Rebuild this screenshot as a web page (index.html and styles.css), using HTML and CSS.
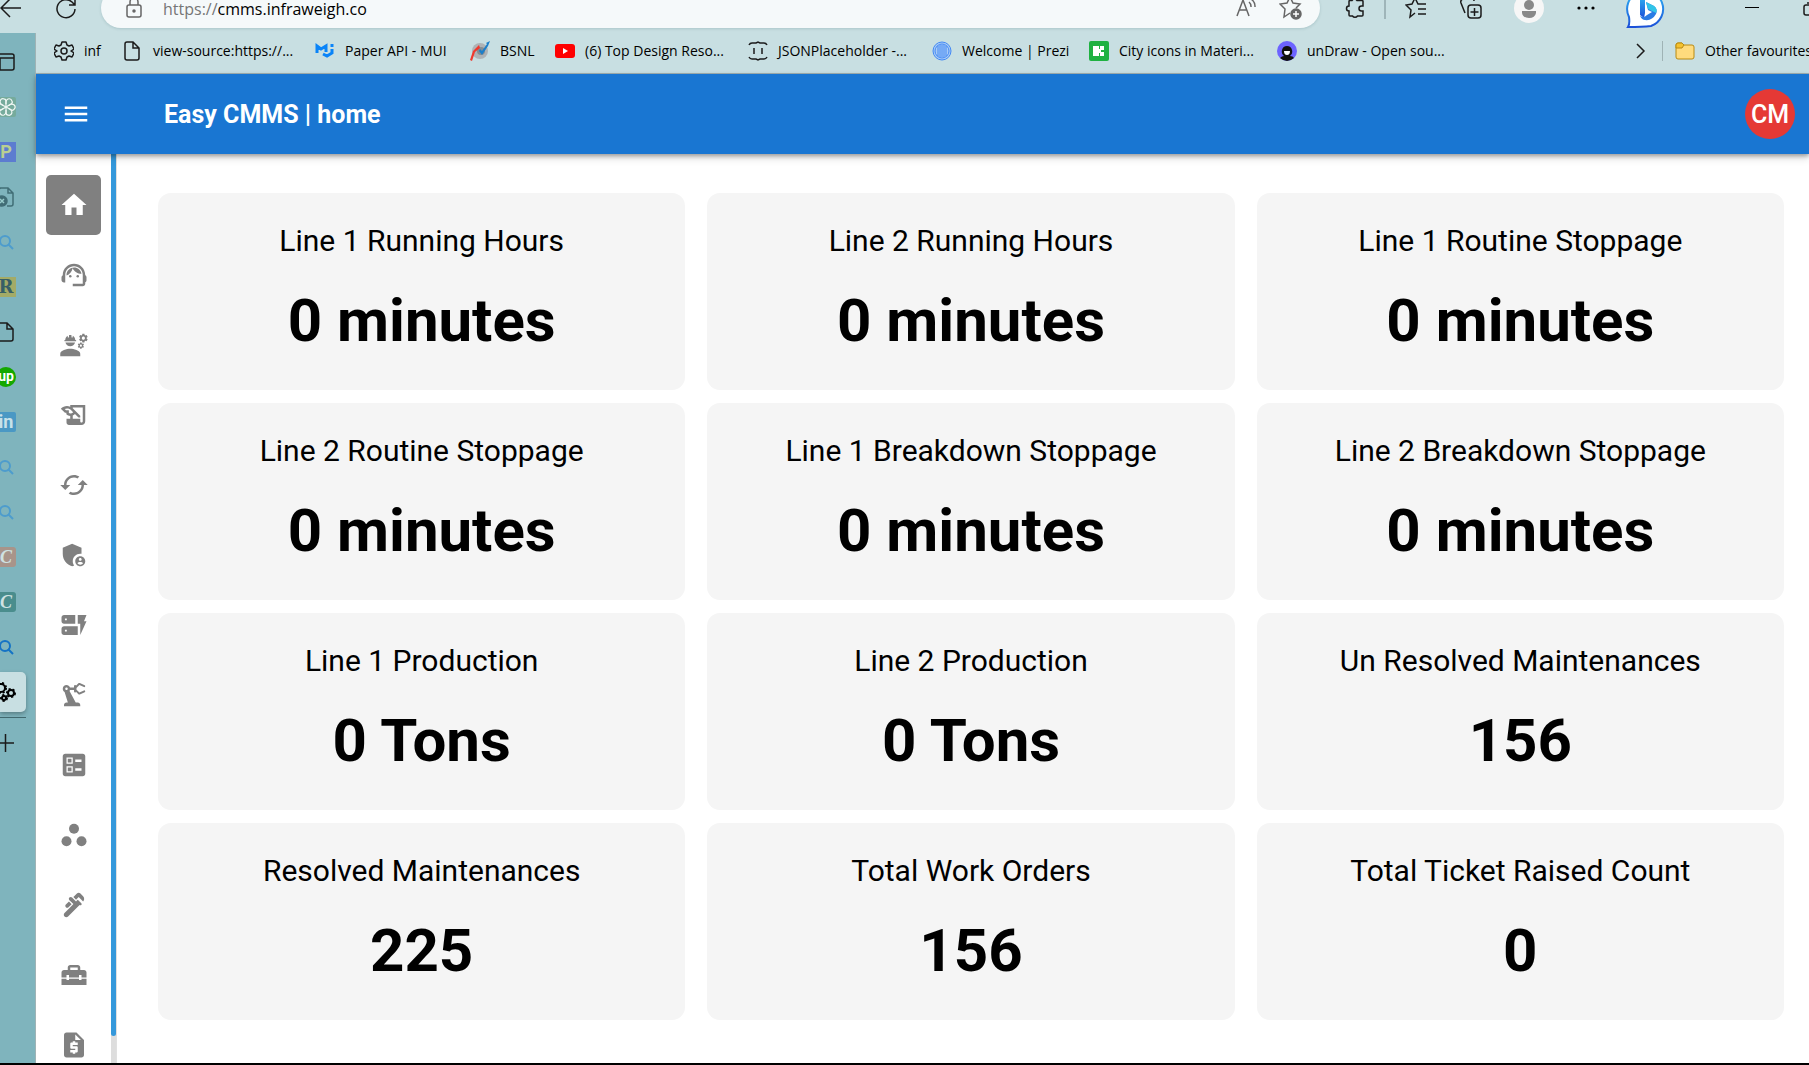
FILE: index.html
```html
<!DOCTYPE html>
<html lang="en">
<head>
<meta charset="utf-8">
<title>Easy CMMS | home</title>
<link rel="stylesheet" href="styles.css">
</head>
<body>
<div class="browser">
  <div class="toolbar">
    <button class="tool back" aria-label="Back"><svg width="22" height="20" viewBox="0 0 22 20" class="line"><path d="M21 10H1M10 1L1 10l9 9"/></svg></button>
    <button class="tool refresh" aria-label="Refresh"><svg width="22" height="22" viewBox="0 0 22 22" class="line"><path d="M20 12A9 9 0 1 1 17 5l3 3M20 2v6h-6"/></svg></button>
    <div class="omnibox">
      <svg width="16" height="22" viewBox="0 0 16 22" class="line grey"><rect x="1" y="8" width="14" height="12" rx="2"/><path d="M4 8V5a4 4 0 0 1 8 0v3"/><circle cx="8" cy="14" r="1" fill="#666"/></svg>
      <div class="url"><span>https://</span>cmms.infraweigh.co</div>
      <button class="tool" aria-label="Read aloud"><svg width="22" height="20" viewBox="0 0 22 20" class="line grey"><path d="M1 18L7 2l6 16M3 12h8M13 4a6 6 0 0 1 2 5M15 1a9 9 0 0 1 4 8"/></svg></button>
      <button class="tool" aria-label="Add to favourites"><svg width="24" height="24" viewBox="0 0 24 24" class="line grey"><path d="M11 17l-6 4 1-8-5-5 7-1 3-6 3 6 7 1-4 4"/><circle cx="17" cy="18" r="5" fill="#666"/><path d="M17 15v6M14 18h6" stroke="#fff"/></svg></button>
    </div>
    <div class="tools">
      <button class="tool ext" aria-label="Extensions"><svg width="20" height="22" viewBox="0 0 20 22" class="line"><path d="M7 3.500a3 3 0 0 1 5 0h5q1 0 1 1V9h-1.500a2.500 2.500 0 0 0 0 5H18v4q0 1-1 1h-4.500a3 3 0 0 1-5 0H5q-1 0-1-1v-4a2.500 2.500 0 0 1 0-5V4.500q0-1 1-1z"/></svg></button>
      <button class="tool fav" aria-label="Favourites"><svg width="22" height="22" viewBox="0 0 22 22" class="line"><path d="M10 16l-5 4 1-7-5-5 6-1 3-6 3 6h8M13 12h8M13 17h8"/></svg></button>
      <button class="tool coll" aria-label="Collections"><svg width="22" height="22" viewBox="0 0 22 22" class="line"><rect x="8" y="8" width="13" height="13" rx="3"/><path d="M14.500 11v8M10.500 15h8M5 16L1 6q-1-3 2-4l8-1q3 0 3 3"/></svg></button>
      <button class="tool profile" aria-label="Profile"><svg width="30" height="30" viewBox="0 0 30 30"><circle cx="15" cy="15" r="15" fill="#f6f6f6"/><circle cx="15" cy="12" r="5" fill="#888"/><path d="M8 18h14v2q-1 5-7 5t-7-5z" fill="#888"/></svg></button>
      <button class="tool more" aria-label="Settings and more"><svg width="18" height="4" viewBox="0 0 18 4"><circle cx="2" cy="2" r="1.600"/><circle cx="9" cy="2" r="1.600"/><circle cx="16" cy="2" r="1.600"/></svg></button>
      <button class="tool bing" aria-label="Bing"><svg width="40" height="40" viewBox="0 0 40 40"><defs><linearGradient id="b" x1="0" y1="0" x2="0" y2="1"><stop offset="0" stop-color="#2fb8f5"/><stop offset="1" stop-color="#1b50d8"/></linearGradient></defs><path d="M2 39q2-3 1-10A18 18 0 1 1 25 38q-9 1-23 1z" fill="#fff" stroke="url(#b)" stroke-width="2"/><path d="M14 7l5 2v16l-1 5-4-3z" fill="url(#b)"/><path d="M20 14l8 4q4 3 2 8-4 7-11 6-3 0-5-4l3 1q2 0 4-2l5-3-4-2z" fill="#2a7be4"/><path d="M20 14l8 4q4 3 2 7l-6-3-2-1z" fill="#31c4e8"/></svg></button>
      <button class="tool min" aria-label="Minimise"><svg width="14" height="2" viewBox="0 0 14 2"><path d="M0 0h14v1H0z"/></svg></button>
      <button class="tool max" aria-label="Maximise"><svg width="15" height="15" viewBox="0 0 15 15" class="line"><rect x="1" y="4" width="10" height="10" rx="2"/><path d="M4 2h8v8"/></svg></button>
    </div>
  </div>

  <div class="window">
    <nav class="tabs" aria-label="Tabs">
      <button class="tab" aria-label="Tab actions"><svg width="20" height="20" viewBox="0 0 20 20" class="line"><rect x="1" y="2" width="17" height="16" rx="2"/><path d="M1 6h17M4 6v12"/></svg></button>
      <button class="tab" aria-label="ChatGPT"><svg width="20" height="20" viewBox="0 0 20 20"><rect width="20" height="20" rx="2" fill="#76ab9c"/><g fill="none" stroke="#eff7f4" stroke-width="1.200"><path id="k" d="M10 7V5q0-2 2-3 3-1 4 2 1 2-1 3l-5 3"/><use href="#k" transform="rotate(60 10 10)"/><use href="#k" transform="rotate(120 10 10)"/><use href="#k" transform="rotate(180 10 10)"/><use href="#k" transform="rotate(240 10 10)"/><use href="#k" transform="rotate(300 10 10)"/></g></svg></button>
      <button class="tab" aria-label="P"><span class="tile purple">P</span></button>
      <button class="tab" aria-label="Blocked page"><svg width="20" height="20" viewBox="0 0 20 20" class="line faded"><path d="M3 8V3q0-2 2-2h7l5 5v11q0 2-2 2h-4M12 1v5h5"/><circle cx="6" cy="14" r="5" fill="#416d76"/><path d="M4 12l4 4M8 12l-4 4" stroke="#9cc"/></svg></button>
      <button class="tab" aria-label="Search"><svg width="20" height="20" viewBox="0 0 20 20" class="search"><circle cx="9" cy="9" r="5"/><path d="M12 12l5 5"/></svg></button>
      <button class="tab" aria-label="R"><span class="tile olive">R</span></button>
      <button class="tab" aria-label="New tab"><svg width="20" height="20" viewBox="0 0 20 20" class="line"><path d="M2 1h9l6 6v10q0 2-2 2H2zM11 1v6h6"/></svg></button>
      <button class="tab" aria-label="Upwork"><span class="tile up">up</span></button>
      <button class="tab" aria-label="LinkedIn"><span class="tile linkedin">in</span></button>
      <button class="tab" aria-label="Search"><svg width="20" height="20" viewBox="0 0 20 20" class="search"><circle cx="9" cy="9" r="5"/><path d="M12 12l5 5"/></svg></button>
      <button class="tab" aria-label="Search"><svg width="20" height="20" viewBox="0 0 20 20" class="search"><circle cx="9" cy="9" r="5"/><path d="M12 12l5 5"/></svg></button>
      <button class="tab" aria-label="C"><span class="tile script tan">C</span></button>
      <button class="tab" aria-label="C"><span class="tile script teal">C</span></button>
      <button class="tab" aria-label="Search"><svg width="20" height="20" viewBox="0 0 20 20" class="search strong"><circle cx="9" cy="9" r="5"/><path d="M12 12l5 5"/></svg></button>
      <button class="tab active" aria-label="Easy CMMS"><svg width="20" height="20" viewBox="0 0 20 20" fill="none" stroke="#000"><g stroke-width="2"><circle cx="5" cy="6" r="4"/><circle cx="15" cy="11" r="3"/><circle cx="8" cy="16" r="2"/></g><g stroke-width="2" stroke-dasharray="2 2"><circle cx="5" cy="6" r="5"/><circle cx="15" cy="11" r="4"/><circle cx="8" cy="16" r="3"/></g></svg></button>
      <button class="tab add" aria-label="New tab"><svg width="20" height="20" viewBox="0 0 20 20" class="line"><path d="M9.500 1v18M0 10h18"/></svg></button>
    </nav>

    <div class="page">
      <nav class="bookmarks" aria-label="Favourites">
        <a href="#"><svg width="20" height="20" viewBox="0 0 20 20" class="line"><path d="M8 1h4l1 3 2 1 3-1 2 4-3 2 3 2-2 4-3-1-2 1-1 3H8l-1-3-2-1-3 1-2-4 3-2-3-2 2-4 3 1 2-1z" stroke-linejoin="round"/><circle cx="10" cy="10" r="3"/></svg>inf</a>
        <a href="#"><svg width="20" height="20" viewBox="0 0 20 20" class="line"><path d="M10 1H4Q2 1 2 3v14q0 2 2 2h10q2 0 2-2V7zM10 1v6h6"/></svg>view-source:https://...</a>
        <a href="#"><svg width="20" height="20" viewBox="0 0 20 20" fill="none" stroke="#0a84f8" stroke-width="3"><path d="M2 12V5l4 3 5-3v6M8 13l4 2 5-3V8M17 3v3"/></svg>Paper API - MUI</a>
        <a href="#"><svg width="20" height="20" viewBox="0 0 20 20"><circle cx="10" cy="10" r="8" fill="#aeb3b6"/><circle cx="11" cy="10" r="4" fill="#858d92"/><path d="M0 19l3-9 6-6 1 3-5 4-3 9z" fill="#f0392e"/><path d="M9 10l3 4 6-9 2-5-4 2 1 1-5 7-2-2z" fill="#1c7fca"/></svg>BSNL</a>
        <a href="#"><svg width="20" height="20" viewBox="0 0 20 20"><rect y="3" width="20" height="14" rx="3" fill="#f00"/><path d="M8 7l5 3-5 3z" fill="#fff"/></svg>(6) Top Design Reso...</a>
        <a href="#"><svg width="20" height="20" viewBox="0 0 20 20" class="line"><path d="M1 4q1-2 3-2h4l2-1 2 1h4q2 0 3 2M1 16q1 2 3 2h4l2 1 2-1h4q2 0 3-2M6 7v6M14 7v6"/></svg>JSONPlaceholder -...</a>
        <a href="#"><svg width="20" height="20" viewBox="0 0 20 20" fill="none" stroke="#4289f5"><circle cx="10" cy="10" r="9" fill="#a9cbf5"/><circle cx="10" cy="10" r="7"/><path d="M6 5v10M8 4v12M10 4v12M12 4v12M14 5v10"/></svg>Welcome | Prezi</a>
        <a href="#"><svg width="20" height="20" viewBox="0 0 20 20"><rect width="20" height="20" rx="2" fill="#1fb141"/><path d="M4 5h6v10H4zM11 5h4v4h-4zM11 11h4v4h-4zM10 8h2v4h-2z" fill="#fff"/></svg>City icons in Materi...</a>
        <a href="#"><svg width="20" height="20" viewBox="0 0 20 20"><circle cx="10" cy="10" r="10" fill="#6c63ff"/><path d="M3 17q2-2 4-2-3-2-2-6 1-4 5-4t5 4q1 4-2 6 3 0 4 2-7 6-14 0z" fill="#111"/><path d="M7 10h6q0 4-3 4t-3-4z" fill="#fff"/></svg>unDraw - Open sou...</a>
        <button class="expand" aria-label="More favourites"><svg width="10" height="16" viewBox="0 0 10 16" class="line"><path d="M1 1l7 7-7 7"/></svg></button>
        <a class="folder" href="#"><svg width="20" height="20" viewBox="0 0 20 20" fill="#ffdb7d" stroke="#b88a12"><path d="M1 4q0-2 2-2h4l2 2h8q2 0 2 2v10q0 2-2 2H3q-2 0-2-2z"/><path d="M1 4q0-2 2-2h4l2 2-2 3H1z" fill="#f5c22f"/></svg>Other favourites</a>
      </nav>

      <header class="appbar">
        <button class="menu" aria-label="Open menu"><svg class="icon" viewBox="0 0 24 24"><path d="M3 18h18v-2H3v2zm0-5h18v-2H3v2zm0-7v2h18V6H3z"/></svg></button>
        <h1>Easy CMMS | home</h1>
        <button class="avatar">CM</button>
      </header>

      <div class="app">
        <div class="sidebar">
          <nav class="side-links" aria-label="Main">
            <a class="current" href="#" aria-label="Home"><svg class="icon" viewBox="0 0 24 24"><path d="M10 20v-6h4v6h5v-8h3L12 3 2 12h3v8z"/></svg></a>
            <a href="#" aria-label="Support"><svg class="icon" viewBox="0 0 24 24"><path d="M21 12.220C21 6.730 16.740 3 12 3c-4.690 0-9 3.650-9 9.280-.6.340-1 .980-1 1.720v2c0 1.100.9 2 2 2h1v-6.100c0-3.870 3.130-7 7-7s7 3.130 7 7V19h-8v2h8c1.100 0 2-.9 2-2v-1.220c.590-.310 1-.920 1-1.640v-2.300c0-.7-.410-1.310-1-1.620z"/><circle cx="9" cy="13" r="1"/><circle cx="15" cy="13" r="1"/><path d="M18 11.030C17.520 8.180 15.040 6 12.050 6c-3.030 0-6.290 2.510-6.030 6.450 2.470-1.010 4.330-3.210 4.860-5.890 1.310 2.630 4 4.440 7.120 4.470z"/></svg></a>
            <a href="#" aria-label="Engineers"><svg class="icon" viewBox="0 0 24 24"><path d="M9 15c-2.670 0-8 1.340-8 4v2h16v-2c0-2.660-5.330-4-8-4zm13.100-8.160c.01-.11.02-.22.02-.34 0-.12-.01-.23-.03-.34l.74-.58c.07-.05.08-.15.04-.22l-.7-1.210c-.04-.08-.14-.1-.21-.08l-.86.35c-.18-.14-.38-.25-.59-.34l-.13-.93c-.02-.09-.09-.15-.18-.15h-1.400c-.09 0-.16.06-.17.15l-.13.93c-.21.09-.41.21-.59.34l-.87-.35c-.08-.03-.17 0-.21.08l-.7 1.210c-.04.08-.03.17.04.22l.74.58c-.02.11-.03.23-.03.34 0 .11.01.23.03.34l-.74.58c-.07.05-.08.15-.04.22l.7 1.210c.04.08.14.1.21.08l.87-.35c.18.14.38.25.59.34l.13.93c.01.09.08.15.17.15h1.400c.09 0 .16-.06.17-.15l.13-.93c.21-.09.41-.21.59-.34l.87.35c.08.03.17 0 .21-.08l.7-1.210c.04-.08.03-.17-.04-.22l-.73-.58zm-2.600.91c-.69 0-1.250-.56-1.250-1.250s.56-1.250 1.250-1.250 1.250.56 1.250 1.250-.56 1.250-1.250 1.250zm.42 3.930-.5-.87c-.03-.06-.1-.08-.15-.06l-.62.25c-.13-.1-.27-.18-.42-.24l-.09-.66c-.02-.06-.08-.1-.14-.1h-1c-.06 0-.11.04-.12.11l-.09.66c-.15.06-.29.15-.42.24l-.62-.25c-.06-.02-.12 0-.15.06l-.5.87c-.03.06-.02.12.03.16l.53.41c-.01.08-.02.16-.02.24 0 .08.01.17.02.24l-.53.41c-.05.04-.06.11-.03.16l.5.87c.03.06.1.08.15.06l.62-.25c.13.1.27.18.42.24l.09.66c.01.07.06.11.12.11h1c.06 0 .12-.04.12-.11l.09-.66c.15-.06.29-.15.42-.24l.62.25c.06.02.12 0 .15-.06l.5-.87c.03-.06.02-.12-.03-.16l-.52-.41c.01-.08.02-.16.02-.24 0-.08-.01-.17-.02-.24l.53-.41c.05-.04.06-.11.04-.17zm-2.420 1.650c-.46 0-.83-.38-.83-.83 0-.46.38-.83.83-.83s.83.38.83.83c0 .46-.37.83-.83.83zM4.740 9h8.530c.27 0 .49-.22.49-.49v-.02c0-.27-.22-.49-.49-.49H13c0-1.480-.81-2.750-2-3.450v.95c0 .28-.22.5-.5.5s-.5-.22-.5-.5V4.140C9.680 4.060 9.350 4 9 4s-.68.06-1 .14V5.500c0 .28-.22.5-.5.5S7 5.780 7 5.500v-.95C5.810 5.250 5 6.520 5 8h-.26c-.27 0-.49.22-.49.49v.03c0 .26.22.48.49.48zM9 13c1.860 0 3.410-1.280 3.860-3H5.140c.45 1.720 2 3 3.860 3z"/></svg></a>
            <a href="#" aria-label="History"><svg class="icon" viewBox="0 0 24 24"><path d="M9 4v1.380c-.83-.33-1.720-.5-2.610-.5-1.790 0-3.580.68-4.950 2.050l3.330 3.330h1.110v1.110c.86.86 1.980 1.310 3.110 1.360V15H6v3c0 1.100.9 2 2 2h10c1.660 0 3-1.340 3-3V4H9zm-1.110 6.410V8.260H5.610L4.570 7.220a5.070 5.070 0 0 1 1.820-.34c1.340 0 2.590.52 3.540 1.460l1.410 1.410-.2.200c-.51.51-1.190.8-1.920.8-.47 0-.93-.12-1.330-.34zM19 17c0 .55-.45 1-1 1s-1-.45-1-1v-2h-6v-2.590c.57-.23 1.100-.57 1.560-1.030l.2-.2L15.590 14H17v-1.410l-6-5.970V6h8v11z"/></svg></a>
            <a href="#" aria-label="Routine"><svg class="icon" viewBox="0 0 24 24"><path d="m19 8-4 4h3c0 3.310-2.690 6-6 6-1.010 0-1.970-.25-2.800-.7l-1.460 1.460C8.970 19.540 10.430 20 12 20c4.420 0 8-3.580 8-8h3l-4-4zM6 12c0-3.310 2.690-6 6-6 1.010 0 1.970.25 2.800.7l1.460-1.460C15.030 4.460 13.570 4 12 4c-4.420 0-8 3.580-8 8H1l4 4 4-4H6z"/></svg></a>
            <a href="#" aria-label="Admin"><svg class="icon" viewBox="0 0 24 24"><path d="M17 11c.34 0 .67.04 1 .09V6.270L10.500 3 3 6.270v4.910c0 4.540 3.200 8.790 7.500 9.820.55-.13 1.080-.32 1.600-.55-.69-.98-1.100-2.170-1.100-3.450 0-3.310 2.690-6 6-6z"/><path d="M17 13c-2.210 0-4 1.790-4 4s1.790 4 4 4 4-1.790 4-4-1.790-4-4-4zm0 1.380c.62 0 1.120.51 1.120 1.120s-.51 1.120-1.120 1.120-1.120-.51-1.120-1.120.5-1.120 1.120-1.120zm0 5.370c-.93 0-1.740-.46-2.240-1.170.05-.72 1.510-1.080 2.240-1.080s2.190.36 2.240 1.080c-.5.71-1.310 1.170-2.240 1.170z"/></svg></a>
            <a href="#" aria-label="Forms"><svg class="icon" viewBox="0 0 24 24"><path d="M17 20v-9h-2V4h7l-2 5h2l-5 11zm-2-7v7H4c-1.100 0-2-.9-2-2v-3c0-1.100.9-2 2-2h11zm-8.750 2.750h-1.500v1.500h1.500v-1.500zM13 4v7H4c-1.100 0-2-.9-2-2V6c0-1.100.9-2 2-2h9zM6.250 6.750h-1.500v1.500h1.500v-1.500z"/></svg></a>
            <a href="#" aria-label="Machines"><svg class="icon" viewBox="0 0 24 24"><path d="m19.930 8.350-3.600 1.680L14 7.700V6.300l2.330-2.330 3.600 1.680c.38.18.82.01 1-.36.18-.38.01-.82-.36-1l-3.920-1.830c-.38-.18-.83-.1-1.130.2L13.780 4.400c-.18-.24-.46-.4-.78-.4-.55 0-1 .45-1 1v1H8.820C8.400 4.840 7.300 4 6 4 4.340 4 3 5.340 3 7c0 1.100.6 2.050 1.480 2.580L7.080 18H6c-1.100 0-2 .9-2 2v1h13v-1c0-1.100-.9-2-2-2h-1.620L8.410 8.770c.17-.24.31-.49.41-.77H12v1c0 .55.45 1 1 1 .32 0 .6-.16.78-.4l1.740 1.740c.3.3.75.38 1.130.2l3.920-1.830c.38-.18.54-.62.36-1-.18-.37-.62-.54-1-.36zM6 8c-.55 0-1-.45-1-1s.45-1 1-1 1 .45 1 1-.45 1-1 1z"/></svg></a>
            <a href="#" aria-label="Checklists"><svg class="icon" viewBox="0 0 24 24"><path d="M13 9.500h5v-2h-5v2zm0 7h5v-2h-5v2zm6 4.500H5c-1.100 0-2-.9-2-2V5c0-1.100.9-2 2-2h14c1.100 0 2 .9 2 2v14c0 1.100-.9 2-2 2zM6 11h5V6H6v5zm1-4h3v3H7V7zM6 18h5v-5H6v5zm1-4h3v3H7v-3z"/></svg></a>
            <a href="#" aria-label="Workspaces"><svg class="icon" viewBox="0 0 24 24"><circle cx="6" cy="17" r="4"/><circle cx="18" cy="17" r="4"/><circle cx="12" cy="7" r="4"/></svg></a>
            <a href="#" aria-label="Maintenance"><svg class="icon" viewBox="0 0 24 24"><path d="M19.280 4.930l-2.120-2.120c-.78-.78-2.050-.78-2.830 0L11.500 5.640l2.120 2.120 2.120-2.120 3.540 3.540c1.170-1.180 1.170-3.080 0-4.250zM5.490 13.770c.59.59 1.540.59 2.120 0l2.470-2.470-2.120-2.130-2.470 2.470c-.59.59-.59 1.540 0 2.130z"/><path d="m15.040 7.760-.71.71-.71.71L10.440 6c-.59-.6-1.540-.6-2.120-.01-.59.59-.59 1.540 0 2.120l3.180 3.180-.71.71-6.360 6.360c-.78.78-.78 2.050 0 2.830.78.78 2.050.78 2.830 0L16.450 12c.39.39 1.020.39 1.410 0s.39-1.020 0-1.410l-2.820-2.830z"/></svg></a>
            <a href="#" aria-label="Tools"><svg class="icon" viewBox="0 0 24 24"><path d="M18 16h-2v-1H8v1H6v-1H2v5h20v-5h-4v1zM20 8h-3V6c0-1.100-.9-2-2-2H9c-1.100 0-2 .9-2 2v2H4c-1.100 0-2 .9-2 2v4h4v-2h2v2h8v-2h2v2h4v-4c0-1.100-.9-2-2-2zm-5 0H9V6h6v2z"/></svg></a>
            <a href="#" aria-label="Quotes"><svg class="icon" viewBox="0 0 24 24"><path d="M14 2H6c-1.100 0-1.990.9-1.990 2L4 20c0 1.100.89 2 1.990 2H18c1.100 0 2-.9 2-2V8l-6-6zm1 10h-4v1h3c.55 0 1 .45 1 1v3c0 .55-.45 1-1 1h-1v1h-2v-1H9v-2h4v-1h-3c-.55 0-1-.45-1-1v-3c0-.55.45-1 1-1h1V9h2v1h2v2zm-2-4V3.500L17.500 8H13z"/></svg></a>
          </nav>
          <div class="rail"><div class="thumb"></div></div>
        </div>
        <main class="cards">
          <section class="card"><h2>Line 1 Running Hours</h2><p>0 minutes</p></section>
          <section class="card"><h2>Line 2 Running Hours</h2><p>0 minutes</p></section>
          <section class="card"><h2>Line 1 Routine Stoppage</h2><p>0 minutes</p></section>
          <section class="card"><h2>Line 2 Routine Stoppage</h2><p>0 minutes</p></section>
          <section class="card"><h2>Line 1 Breakdown Stoppage</h2><p>0 minutes</p></section>
          <section class="card"><h2>Line 2 Breakdown Stoppage</h2><p>0 minutes</p></section>
          <section class="card"><h2>Line 1 Production</h2><p>0 Tons</p></section>
          <section class="card"><h2>Line 2 Production</h2><p>0 Tons</p></section>
          <section class="card"><h2>Un Resolved Maintenances</h2><p>156</p></section>
          <section class="card"><h2>Resolved Maintenances</h2><p>225</p></section>
          <section class="card"><h2>Total Work Orders</h2><p>156</p></section>
          <section class="card"><h2>Total Ticket Raised Count</h2><p>0</p></section>
        </main>
      </div>
    </div>
  </div>
</div>
</body>
</html>
```
FILE: styles.css
```css
* { box-sizing: border-box; }
body { margin: 0; font-family: Roboto, "Liberation Sans", sans-serif; color: #000; }
button { border: 0; padding: 0; margin: 0; background: none; font: inherit; color: inherit; }
a { color: inherit; text-decoration: none; }
svg { display: block; flex: none; }
h1, h2, p { margin: 0; }

.browser {
  display: flex;
  flex-direction: column;
  height: 100vh;
  overflow: hidden;
  background: #c8dfe2;
  border-bottom: 2px solid #000;
}
.line { fill: none; stroke: #1b1b1b; stroke-width: 1.5; }
.line.grey { stroke: #666; }
.line.faded { stroke: #416d76; }

/* Browser toolbar: its upper part runs past the top of the window */
.toolbar {
  display: flex;
  align-items: center;
  flex: none;
  height: 45px;
  margin-top: -12px;
  padding-bottom: 5px;
}
.tool { display: flex; align-items: center; justify-content: center; flex: none; }
.back { width: 21px; }
.refresh { width: 42px; margin: 0 14px 0 24px; }
.omnibox {
  display: flex;
  align-items: center;
  flex: 1;
  height: 40px;
  padding: 0 17px 0 25px;
  gap: 21px;
  border-radius: 20px;
  background: #f5f9fa;
  box-shadow: 0 1px 3px rgba(0, 60, 70, 0.15);
}
.url { flex: 1; padding-top: 2px; font: 16px/16px "Open Sans", "Noto Sans", sans-serif; }
.url span { color: #767676; }
.tools { display: flex; align-items: center; flex: none; padding-left: 6px; }
.ext { width: 60px; height: 22px; border-right: 2px solid #9fb5b9; }
.fav { width: 59px; }
.coll { width: 52px; }
.profile { width: 64px; }
.more { width: 50px; }
.bing { width: 70px; margin-right: 46px; }
.min { width: 50px; }
.max { width: 32px; padding-left: 26px; justify-content: flex-start; overflow: hidden; }

.window { display: flex; flex: 1; min-height: 0; }

/* Vertical tab strip */
.tabs {
  display: flex;
  flex-direction: column;
  gap: 5px;
  flex: none;
  width: 36px;
  padding-top: 9px;
  background: #7fb4bd;
  border-right: 1px solid #9fb3b5;
  overflow: hidden;
}
.tab {
  display: flex;
  align-items: center;
  justify-content: flex-end;
  flex: none;
  width: 26px;
  height: 40px;
  padding-right: 10px;
}
.tab.active {
  border-radius: 0 5px 5px 0;
  background: #c8dfe2;
  box-shadow: 0 2px 4px rgba(0, 0, 0, 0.3);
}
.tab.add { height: 50px; border-top: 1px solid #41686e; }
.tile {
  flex: none;
  width: 20px;
  height: 20px;
  font-size: 18px;
  line-height: 20px;
  font-weight: 700;
  text-align: center;
}
.purple { background: #5c7cd0; color: #b9cf92; }
.olive { background: #a3ab67; color: #375f66; font-family: "DejaVu Serif", serif; }
.up { background: #14a800; color: #fff; border-radius: 50%; font-size: 14px; line-height: 18px; }
.linkedin { background: #4a98c4; color: #c8e1e9; border-radius: 2px; }
.script { border-radius: 3px; color: #cfe2e2; font-style: italic; font-family: "Liberation Serif", serif; }
.tan { background: #a8948a; }
.teal { background: #4a8d8d; }
.search { fill: none; stroke: #4d9ccd; stroke-width: 2; }
.search.strong { stroke: #1473c5; }

.page { display: flex; flex-direction: column; flex: 1; min-width: 0; background: #fff; }

.bookmarks {
  display: grid;
  grid-template-columns: 69px 192px 155px 85px 193px 184px 157px 188px 1fr 26px 147px;
  align-items: center;
  flex: none;
  height: 41px;
  padding: 0 0 4px 18px;
  border-bottom: 1px solid #a2b2b4;
  background: #c8dfe2;
  font: 14px/20px "Open Sans", "Noto Sans", sans-serif;
  white-space: nowrap;
  overflow: hidden;
}
.bookmarks a { display: flex; align-items: center; gap: 10px; }
.expand { display: flex; height: 20px; align-items: center; }
.bookmarks .folder { height: 20px; padding-left: 12px; border-left: 1px solid #9fb3b5; }

.appbar {
  position: relative;
  display: flex;
  align-items: center;
  flex: none;
  height: 80px;
  padding: 0 14px 0 25px;
  background: #1976d2;
  color: #fff;
  box-shadow: 0 2px 4px rgba(0, 0, 0, 0.3), 0 4px 8px rgba(0, 0, 0, 0.15);
}
.icon { width: 30px; height: 30px; fill: currentColor; }
.appbar h1 { flex: 1; margin-left: 73px; padding-top: 2px; font-size: 25px; line-height: 40px; font-weight: 700; }
.avatar {
  width: 50px;
  height: 50px;
  padding-top: 1px;
  border-radius: 50%;
  background: #e53935;
  font-size: 25px;
  line-height: 49px;
  font-weight: 500;
  text-align: center;
}

.app { display: flex; flex: 1; min-height: 0; }
.sidebar { display: flex; flex: none; width: 81px; border-right: 1px solid #e0e0e0; }
.side-links {
  display: flex;
  flex-direction: column;
  gap: 10px;
  flex: 1;
  padding: 21px 10px 0;
  overflow: hidden;
  color: #808080;
}
.side-links a {
  display: flex;
  align-items: center;
  justify-content: center;
  flex: none;
  height: 60px;
  border-radius: 5px;
}
.side-links .current { background: #808080; color: #fff; }
.rail { width: 5px; background: #ddd; }
.thumb { height: 97%; border-radius: 0 0 3px 3px; background: #3498db; }

.cards {
  display: grid;
  grid-template-columns: repeat(3, 1fr);
  gap: 13px 22px;
  align-content: start;
  flex: 1;
  min-width: 0;
  padding: 39px 25px 20px 41px;
  overflow: hidden;
}
.card {
  padding: 30px 20px 33px;
  border-radius: 13px;
  background: #f5f5f5;
  text-align: center;
}
.card h2 { font-size: 30px; line-height: 36px; font-weight: 400; }
.card p { margin-top: 26px; font-size: 60px; line-height: 72px; font-weight: 700; }
```
